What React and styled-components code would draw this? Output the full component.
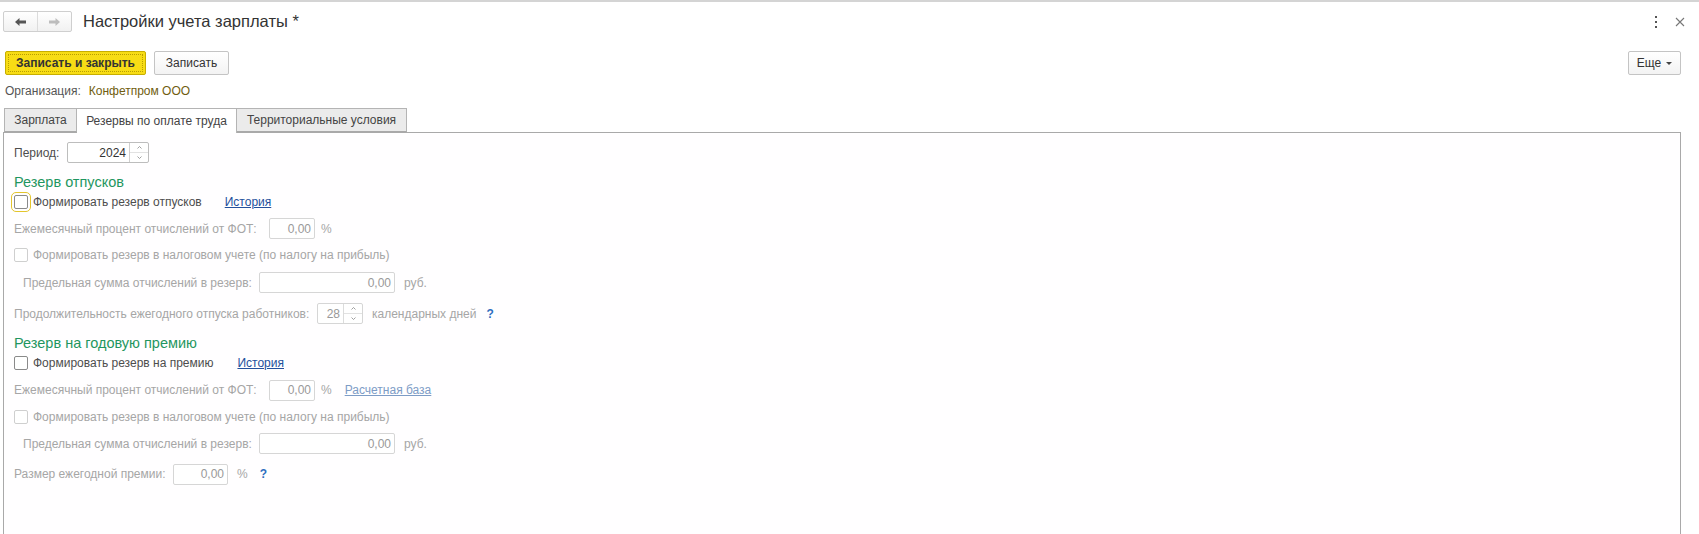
import React from "react";
import styled, { createGlobalStyle } from "styled-components";

const GlobalStyle = createGlobalStyle`
  html, body {
    margin: 0;
    padding: 0;
    background: #fff;
  }
  body {
    font-family: Arial, "Liberation Sans", sans-serif;
    font-size: 12px;
    color: #4d4d4d;
    white-space: nowrap;
  }
`;

const Window = styled.div`
  width: 1699px;
  height: 534px;
  overflow: hidden;
  border-top: 2px solid #d4d4d4;
  box-sizing: border-box;
  display: flex;
  flex-direction: column;
`;

const Header = styled.div`
  height: 30px;
  display: flex;
  align-items: flex-end;
  padding: 0 14px 0 3px;
`;

const NavGroup = styled.div`
  display: flex;
  height: 21px;
  border: 1px solid #cfcfcf;
  border-radius: 2px;
  background: linear-gradient(#ffffff, #f1f1f1);
  box-sizing: border-box;
`;

const NavButton = styled.div`
  width: 33px;
  display: flex;
  align-items: center;
  justify-content: center;
  & + & {
    border-left: 1px solid #dcdcdc;
  }
`;

const Title = styled.div`
  margin-left: 11px;
  font-size: 16.5px;
  color: #333;
  line-height: 21px;
  flex: 1;
`;

const HeaderIcons = styled.div`
  display: flex;
  align-items: center;
  gap: 17px;
  height: 21px;
`;

const CommandBar = styled.div`
  display: flex;
  align-items: center;
  margin-top: 19px;
  padding: 0 18px 0 5px;
  gap: 8px;
`;

const Button = styled.div`
  width: ${(p) => p.$w}px;
  height: 24px;
  box-sizing: border-box;
  display: flex;
  align-items: center;
  justify-content: center;
  border: 1px solid ${(p) => (p.$primary ? "#c7ae00" : "#c4c4c4")};
  border-radius: 2px;
  background: ${(p) =>
    p.$primary ? "#f7dc15" : "linear-gradient(#ffffff, #f3f3f3)"};
  color: #333;
  font-size: 12px;
  font-weight: ${(p) => (p.$primary ? "bold" : "normal")};
  position: relative;
  ${(p) =>
    p.$primary &&
    `&::after {
      content: "";
      position: absolute;
      inset: 2px;
      border: 1px dotted #b99e00;
    }`}
`;

const Spacer = styled.div`
  flex: 1;
`;

const Caret = styled.span`
  display: inline-block;
  margin-left: 5px;
  border-left: 3px solid transparent;
  border-right: 3px solid transparent;
  border-top: 3px solid #444;
`;

const OrgRow = styled.div`
  display: flex;
  align-items: center;
  height: 16px;
  margin-top: 8px;
  padding-left: 5px;
  color: #555;
`;

const OrgValue = styled.span`
  margin-left: 8px;
  color: #705d10;
`;

const Tabs = styled.div`
  display: flex;
  margin-top: 9px;
  padding-left: 4px;
  height: 24px;
`;

const Tab = styled.div`
  width: ${(p) => p.$w}px;
  display: flex;
  align-items: center;
  justify-content: center;
  box-sizing: border-box;
  border: 1px solid #b4b4b4;
  border-left-width: ${(p) => (p.$first ? 1 : 0)}px;
  border-bottom: ${(p) => (p.$active ? "none" : "1px solid #a9a9a9")};
  background: ${(p) => (p.$active ? "#fff" : "#ebebeb")};
  color: #444;
  position: relative;
  z-index: ${(p) => (p.$active ? 1 : 0)};
  height: ${(p) => (p.$active ? 25 : 24)}px;
`;

const Panel = styled.div`
  flex: 1;
  margin: 0 18px 0 3px;
  border: 1px solid #a9a9a9;
  border-bottom: none;
  padding: 9px 0 0 10px;
  background: #fffeff;
`;

const Row = styled.div`
  display: flex;
  align-items: center;
  height: ${(p) => p.$h || 21}px;
  margin-top: ${(p) => p.$mt || 0}px;
  padding-left: ${(p) => p.$indent || 0}px;
  color: ${(p) => (p.$disabled ? "#a6a6a6" : "#4d4d4d")};
`;

const GroupTitle = styled.div`
  height: 20px;
  display: flex;
  align-items: center;
  margin-top: ${(p) => p.$mt || 0}px;
  font-size: 14.5px;
  color: #1f9660;
`;

const Label = styled.span`
  width: ${(p) => (p.$w ? `${p.$w}px` : "auto")};
  flex-shrink: 0;
`;

const Field = styled.div`
  width: ${(p) => p.$w}px;
  height: 21px;
  box-sizing: border-box;
  border: 1px solid ${(p) => (p.$disabled ? "#d6d6d6" : "#bdbdbd")};
  border-radius: 2px;
  display: flex;
  align-items: stretch;
  background: #fff;
  flex-shrink: 0;
  color: ${(p) => (p.$disabled ? "#999" : "#333")};
`;

const FieldValue = styled.div`
  flex: 1;
  display: flex;
  align-items: center;
  justify-content: flex-end;
  padding-right: 3px;
`;

const Spin = styled.div`
  width: 18px;
  border-left: 1px solid ${(p) => (p.$disabled ? "#dcdcdc" : "#cfcfcf")};
  display: flex;
  flex-direction: column;
`;

const SpinHalf = styled.div`
  flex: 1;
  display: flex;
  align-items: center;
  justify-content: center;
  & + & {
    border-top: 1px solid ${(p) => (p.$disabled ? "#e2e2e2" : "#d8d8d8")};
  }
`;

const Unit = styled.span`
  margin-left: ${(p) => p.$ml || 6}px;
`;

const Box = styled.span`
  width: 14px;
  height: 14px;
  box-sizing: border-box;
  border: 1px solid ${(p) => (p.$disabled ? "#cfcfcf" : "#8a8a8a")};
  border-radius: 2px;
  background: #fff;
  margin-right: 5px;
  flex-shrink: 0;
  ${(p) => p.$focused && `outline: 1px solid #e3c52c; outline-offset: 2px;`}
`;

const Link = styled.span`
  margin-left: ${(p) => p.$ml}px;
  color: ${(p) => (p.$disabled ? "#7d9cc6" : "#24509c")};
  text-decoration: underline;
`;

const Help = styled.span`
  margin-left: ${(p) => p.$ml}px;
  color: #2f6fbf;
  font-weight: bold;
  font-size: 12px;
`;

const ArrowLeft = ({ color }) => (
  <svg width="11" height="8" viewBox="0 0 11 8">
    <path d="M0 4 L4.5 0 L4.5 2.6 L11 2.6 L11 5.4 L4.5 5.4 L4.5 8 Z" fill={color} />
  </svg>
);

const ArrowRight = ({ color }) => (
  <svg width="11" height="8" viewBox="0 0 11 8">
    <path d="M11 4 L6.5 0 L6.5 2.6 L0 2.6 L0 5.4 L6.5 5.4 L6.5 8 Z" fill={color} />
  </svg>
);

const Dots = () => (
  <svg width="4" height="12" viewBox="0 0 4 12">
    <rect x="1" y="0" width="2" height="2" fill="#555" />
    <rect x="1" y="5" width="2" height="2" fill="#555" />
    <rect x="1" y="10" width="2" height="2" fill="#555" />
  </svg>
);

const Close = () => (
  <svg width="10" height="10" viewBox="0 0 10 10">
    <path d="M1 1 L9 9 M9 1 L1 9" stroke="#777" strokeWidth="1.1" />
  </svg>
);

const Tick = ({ up }) => (
  <svg width="5" height="3" viewBox="0 0 5 3">
    <path
      d={up ? "M0.5 2.5 L2.5 0.5 L4.5 2.5" : "M0.5 0.5 L2.5 2.5 L4.5 0.5"}
      stroke="#888"
      fill="none"
      strokeWidth="0.8"
    />
  </svg>
);

function Input({ w, value, disabled, spin }) {
  return (
    <Field $w={w} $disabled={disabled}>
      <FieldValue>{value}</FieldValue>
      {spin && (
        <Spin $disabled={disabled}>
          <SpinHalf $disabled={disabled}>
            <Tick up />
          </SpinHalf>
          <SpinHalf $disabled={disabled}>
            <Tick />
          </SpinHalf>
        </Spin>
      )}
    </Field>
  );
}

function Check({ label, disabled, focused }) {
  return (
    <>
      <Box $disabled={disabled} $focused={focused} />
      <span>{label}</span>
    </>
  );
}

export default function App() {
  return (
    <>
      <GlobalStyle />
      <Window>
        <Header>
          <NavGroup>
            <NavButton>
              <ArrowLeft color="#555" />
            </NavButton>
            <NavButton>
              <ArrowRight color="#bdbdbd" />
            </NavButton>
          </NavGroup>
          <Title>Настройки учета зарплаты *</Title>
          <HeaderIcons>
            <Dots />
            <Close />
          </HeaderIcons>
        </Header>

        <CommandBar>
          <Button $primary $w={141}>
            Записать и закрыть
          </Button>
          <Button $w={75}>Записать</Button>
          <Spacer />
          <Button $w={53}>
            Еще
            <Caret />
          </Button>
        </CommandBar>

        <OrgRow>
          Организация:
          <OrgValue>Конфетпром ООО</OrgValue>
        </OrgRow>

        <Tabs>
          <Tab $first $w={73}>
            Зарплата
          </Tab>
          <Tab $active $w={160}>
            Резервы по оплате труда
          </Tab>
          <Tab $w={170}>Территориальные условия</Tab>
        </Tabs>

        <Panel>
          <Row>
            <Label $w={53}>Период:</Label>
            <Input w={82} value="2024" spin />
          </Row>

          <GroupTitle $mt={9}>Резерв отпусков</GroupTitle>
          <Row $h={20}>
            <Check label="Формировать резерв отпусков" focused />
            <Link $ml={23}>История</Link>
          </Row>
          <Row $mt={6} $disabled>
            <Label $w={255}>Ежемесячный процент отчислений от ФОТ:</Label>
            <Input w={46} value="0,00" disabled />
            <Unit>%</Unit>
          </Row>
          <Row $mt={6} $h={20} $disabled>
            <Check label="Формировать резерв в налоговом учете (по налогу на прибыль)" disabled />
          </Row>
          <Row $mt={7} $indent={9} $disabled>
            <Label $w={236}>Предельная сумма отчислений в резерв:</Label>
            <Input w={136} value="0,00" disabled />
            <Unit $ml={9}>руб.</Unit>
          </Row>
          <Row $mt={10} $disabled>
            <Label $w={303}>Продолжительность ежегодного отпуска работников:</Label>
            <Input w={46} value="28" disabled spin />
            <Unit $ml={9}>календарных дней</Unit>
            <Help $ml={10}>?</Help>
          </Row>

          <GroupTitle $mt={9}>Резерв на годовую премию</GroupTitle>
          <Row $h={20}>
            <Check label="Формировать резерв на премию" />
            <Link $ml={24}>История</Link>
          </Row>
          <Row $mt={6} $h={22} $disabled>
            <Label $w={255}>Ежемесячный процент отчислений от ФОТ:</Label>
            <Input w={46} value="0,00" disabled />
            <Unit>%</Unit>
            <Link $ml={13} $disabled>
              Расчетная база
            </Link>
          </Row>
          <Row $mt={6} $h={20} $disabled>
            <Check label="Формировать резерв в налоговом учете (по налогу на прибыль)" disabled />
          </Row>
          <Row $mt={6} $indent={9} $disabled>
            <Label $w={236}>Предельная сумма отчислений в резерв:</Label>
            <Input w={136} value="0,00" disabled />
            <Unit $ml={9}>руб.</Unit>
          </Row>
          <Row $mt={9} $h={22} $disabled>
            <Label $w={159}>Размер ежегодной премии:</Label>
            <Input w={55} value="0,00" disabled />
            <Unit $ml={9}>%</Unit>
            <Help $ml={12}>?</Help>
          </Row>
        </Panel>
      </Window>
    </>
  );
}
